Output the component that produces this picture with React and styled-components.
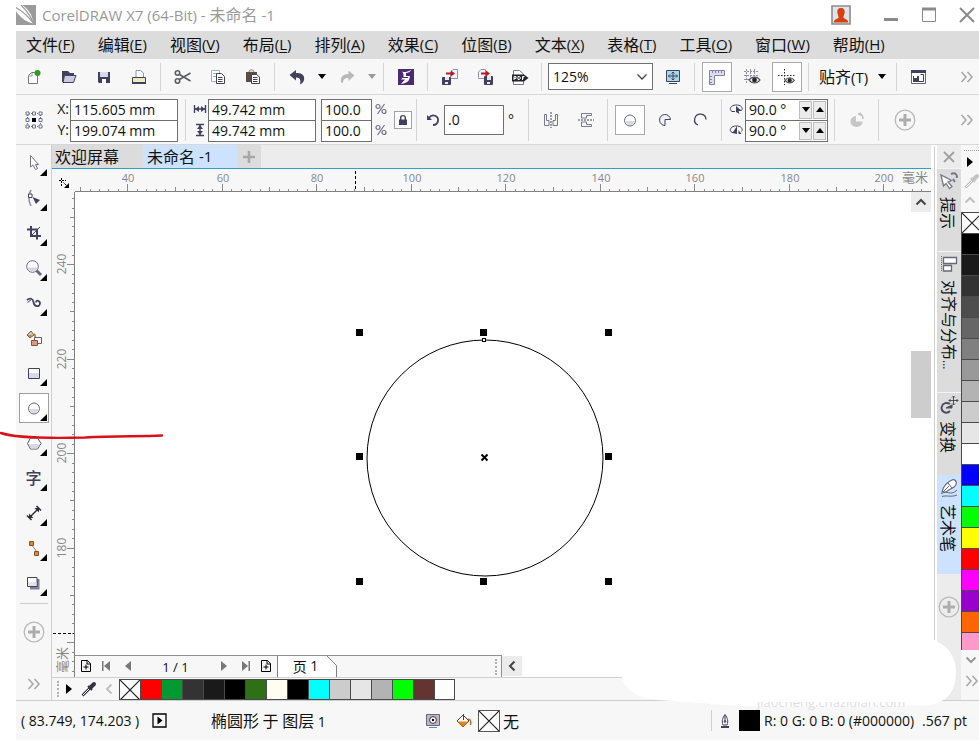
import React from 'react'
import styled, { createGlobalStyle, css } from 'styled-components'


const INK = '#41415f'

const MENUS = [
	['文件', 'F'], ['编辑', 'E'], ['视图', 'V'], ['布局', 'L'], ['排列', 'A'], ['效果', 'C'],
	['位图', 'B'], ['文本', 'X'], ['表格', 'T'], ['工具', 'O'], ['窗口', 'W'], ['帮助', 'H'],
]

const DOC_COLORS = [
	'none', '#ff0000', '#009a33', '#333333', '#1a1a1a', '#000000', '#2d7016', '#fffcf0',
	'#000000', '#00ffff', '#cccccc', '#e6e6e6', '#b3b3b3', '#00ff00', '#663333', '#ffffff',
]

const PALETTE = [
	'none', '#000000', '#1a1a1a', '#333333', '#4d4d4d', '#666666', '#808080', '#999999',
	'#b3b3b3', '#cccccc', '#e6e6e6', '#ffffff', '#0000ff', '#00ffff', '#00ff00', '#ffff00',
	'#ff0000', '#ff00ff', '#9900cc', '#ff6600', '#ff99cc',
]

// ruler scale: pixels per millimetre, and where a known unit falls
const PX_PER_MM = 4.725
const H_ORIGIN = 336.3 - 100 * PX_PER_MM
const V_ORIGIN = 72.7 + 240 * PX_PER_MM


/* ---------- icons ---------- */

const Icon = ({ size = 18, children, ...rest }) => (
	<svg width={size} height={size} viewBox={`0 0 ${size} ${size}`} fill="none" stroke={INK} aria-hidden="true" {...rest}>
		{children}
	</svg>
)

const LogoIcon = () => (
	<Icon size={20} stroke="none">
		<path d="M0 0H20V20H0Z" fill="#9b9b9b" />
		<path d="M0 0H6C12 4 16 9 17.500 18.500C9 17 3 11 0 6Z" fill="#fff" />
		<path d="M0 2.500C6 6 13 12 17.500 18.500M5 0C10 5 15 11 17.500 18.500" stroke="#9b9b9b" strokeWidth="1.200" />
	</Icon>
)

const UserIcon = () => (
	<Icon size={20} stroke="none">
		<path d="M1 1H19V19H1Z" fill="#dfe3ea" stroke="#8d8d8d" strokeWidth="1.600" />
		<path d="M10 3C13 3 14 5 13.600 8C13.300 10 12.400 11 12.400 12.500C13 14 17 14 17.400 17.500H2.600C3 14 7 14 7.600 12.500C7.600 11 6.700 10 6.400 8C6 5 7 3 10 3Z" fill="#d8400f" />
	</Icon>
)

const MinimizeIcon = () => <Icon size={16}><path d="M1 12.500H15" stroke="#8a8a8a" strokeWidth="3" /></Icon>
const MaximizeIcon = () => (
	<Icon size={16} stroke="#8a8a8a"><path d="M1.500 1.500H14.500V14.500H1.500Z" /><path d="M1 2H15" strokeWidth="3" /></Icon>
)
const CloseIcon = () => <Icon size={16} stroke="#8a8a8a" strokeWidth="2"><path d="M1 1L15 15M15 1L1 15" /></Icon>

const NewIcon = () => (
	<Icon>
		<path d="M3.500 7.500L6.500 4.500H12.500V15.500H3.500Z" fill="#fff" stroke="#77777f" />
		<path d="M4 8H7V5" stroke="#9a9aa2" />
		<circle cx="12.500" cy="5" r="3" fill="#2f9a1e" stroke="none" />
	</Icon>
)
const OpenIcon = () => (
	<Icon>
		<path d="M2 3H8L10 5H14V7H5L3 14H2Z" fill={INK} stroke="none" />
		<path d="M4.500 7.500H16L13.500 14.500H3Z" fill="#c7cddd" />
	</Icon>
)
const SaveIcon = () => (
	<Icon>
		<path d="M3 4H15V15H4L3 14Z" fill={INK} stroke="none" />
		<path d="M5 4H13V9H5Z" fill="#d6daea" stroke="none" />
		<path d="M7 11H11V15H7Z" fill="#fff" stroke="none" />
	</Icon>
)
const PrintIcon = () => (
	<Icon>
		<path d="M6 9V2.500H10.500L13.500 5V9" fill="#fff" stroke="#8a9aa5" />
		<path d="M2.500 9.500H15.500V14.500H2.500Z" fill="#efe9c4" />
		<path d="M2 15H16" strokeWidth="2" />
	</Icon>
)
const CutIcon = () => (
	<Icon stroke="#5c5c66" strokeWidth="1.600">
		<circle cx="3.500" cy="5" r="2.200" /><circle cx="3.500" cy="13" r="2.200" />
		<path d="M5.500 6.500L16.500 13M5.500 11.500L16.500 5" />
	</Icon>
)
const CopyIcon = () => (
	<Icon>
		<path d="M2.500 2.500H10.500V13.500H2.500Z" fill="#fff" stroke="#9db5b0" />
		<path d="M4 5.500H9M4 8.500H7" stroke="#9db5b0" />
		<path d="M7.500 5.500H12.500L15.500 8.500V15.500H7.500Z" fill="#fff" />
		<path d="M9 9.500H13.500M9 11.500H13.500M9 13.500H13.500" />
	</Icon>
)
const PasteIcon = () => (
	<Icon>
		<path d="M2 4H13V14H2Z" fill="#5c4d44" stroke="none" />
		<path d="M5 4C5 1 10 1 10 4" fill="#d9dccc" stroke="#8a8a80" />
		<path d="M7.500 6.500H12.500L15.500 9V15.500H7.500Z" fill="#fff" />
		<path d="M9 9.500H13.500M9 11.500H13.500M9 13.500H13.500" />
	</Icon>
)
const UndoIcon = () => (
	<Icon stroke="none"><path d="M1.500 7L8 2V5.200C14 4.500 17 8 16 12C15.500 14 14 15.500 12 16.500C13 13 12.500 9.300 8 9.500V12.500Z" fill={INK} /></Icon>
)
const RedoIcon = () => (
	<Icon stroke="none"><path d="M16.500 7.500L10.500 2.500V6C5 6 2 9 3 14.500L5 15C5 11.500 6.500 10 10.500 10V13Z" fill="#b9b9b9" /></Icon>
)
const LauncherIcon = () => (
	<Icon stroke="none">
		<path d="M1 1H17V17H1Z" fill="#4b2a72" />
		<path d="M5 3C6 5 10 4 14.500 2C13 4 11 5 9 5V8H13L12 12C11 14 8 15.500 4 16C5.500 14 7 13 8 11.500H4L6.500 9V6Z" fill="#fff" />
		<path d="M6 9.500H11" stroke="#4b2a72" />
	</Icon>
)
const ImportIcon = () => (
	<Icon>
		<path d="M9.500 9.500V4L12 1.500H16.500V10.500H10" fill="#f4f4fa" stroke="#8f8fa8" />
		<path d="M1.500 9.500H9.500V16.500H1.500Z" fill={INK} /><path d="M4 9H8V12H4ZM4 14H7V16H4Z" fill="#e4e6f0" stroke="none" />
		<path d="M5 5.500H11" stroke="#c4151c" strokeWidth="2" /><path d="M10 2.500L14 5.500L10 8.500Z" fill="#c4151c" stroke="none" />
	</Icon>
)
const ExportIcon = () => (
	<Icon>
		<path d="M2.500 9.500V4L5 1.500H9.500V10.500H2.500Z" fill="#f4f4fa" stroke="#8f8fa8" />
		<path d="M8.500 8.500H16.500V16.500H8.500Z" fill={INK} /><path d="M11 8H15V12H11ZM11 14H14V16H11Z" fill="#e4e6f0" stroke="none" />
		<path d="M5 5.500H11" stroke="#c4151c" strokeWidth="2" /><path d="M10 2.500L14 5.500L10 8.500Z" fill="#c4151c" stroke="none" />
	</Icon>
)
const PdfIcon = () => (
	<Icon>
		<path d="M2.500 16.500V2.500H8.500L12.500 6V16.500Z" fill="#fff" stroke="#77778c" />
		<path d="M1 6.500H13L17.500 10L13 13.500H1Z" fill="#22222c" stroke="none" />
		<path d="M3 12V8.500H5V10.500H3M7 8.500V11.500H8.500L9.500 10L8.500 8.500ZM11.500 12V8.500H13.500M11.500 10H13" stroke="#fff" />
	</Icon>
)
const FullScreenIcon = () => (
	<Icon>
		<path d="M2.500 2.500H15.500V13.500H2.500Z" fill="#a9d7ea" />
		<path d="M9 4V12M4.500 8H13.500M7.500 5.500L9 4L10.500 5.500M7.500 10.500L9 12L10.500 10.500M6 6.500L4.500 8L6 9.500M12 6.500L13.500 8L12 9.500" />
		<path d="M5 15.500H13" />
	</Icon>
)
const RulersIcon = () => (
	<Icon stroke="#8583ac">
		<path d="M1.500 2.500H16.500V7.500H6.500V16.500H1.500Z" fill="#dcdcf0" />
		<path d="M4.500 2V5M7.500 2V5M10.500 2V5M13.500 2V5M1.500 8.500H4M1.500 11.500H4M1.500 14.500H4" />
	</Icon>
)
const Eye = ({ x, y }) => (
	<g transform={`translate(${x} ${y})`}>
		<path d="M0 4C3 0 8 0 11 4C8 8 3 8 0 4Z" fill="#e9e9ee" stroke="#4d4d55" strokeWidth="1.200" />
		<circle cx="5.500" cy="4" r="2.400" fill="#26262e" stroke="none" />
	</g>
)
const GridIcon = () => (
	<Icon>
		<path d="M1 3.500H15M1 7.500H15M1 11.500H6M3.500 1V15M7.500 1V9M11.500 1V8" stroke="#8e8ea6" strokeDasharray="2 1" />
		<Eye x={6} y={8} />
	</Icon>
)
const GuidesIcon = () => (
	<Icon>
		<path d="M6.500 1V17M0 7.500H17" stroke="#26262e" strokeDasharray="1.500 1.500" />
		<g transform="translate(7 9) scale(.85)"><Eye x={0} y={0} /></g>
	</Icon>
)
const OptionsIcon = () => (
	<Icon>
		<path d="M1.500 2.500H15.500V15.500H1.500Z" fill="#fff" stroke="#66667f" /><path d="M1 3.500H16" strokeWidth="3" />
		<path d="M3 8H9V14H3Z" fill={INK} stroke="none" /><path d="M10.500 6.500H13.500V13.500H9" />
		<path d="M4 8H7V10H4Z" fill="#fff" stroke="none" />
	</Icon>
)
const MoreIcon = () => (
	<Icon size={14} stroke="#a9a9a9" strokeWidth="1.600"><path d="M1.500 2L6 7L1.500 12M7.500 2L12 7L7.500 12" /></Icon>
)

const OriginIcon = () => (
	<Icon stroke="#6d6d92">
		<path d="M4 2.500H14M4 15.500H14M2.500 4V14M15.500 4V14" strokeDasharray="1 1" />
		{[2.5, 9, 15.5].map(x => [2.5, 9, 15.5].map(y => (x === 9 && y === 9
			? <path key="mid" d="M7 7H11V11H7Z" fill="#000" stroke="none" />
			: <path key={`${x}-${y}`} d={`M${x - 1.5} ${y - 1.5}h3v3h-3Z`} fill="#fff" />)))}
	</Icon>
)
const WidthIcon = () => (
	<Icon size={14}><path d="M1.500 3V11M12.500 3V11M2 7H12" strokeWidth="1.400" /><path d="M2 7L6 4V10ZM12 7L8 4V10Z" fill={INK} stroke="none" /></Icon>
)
const HeightIcon = () => (
	<Icon size={14}><path d="M3 1.500H11M3 12.500H11M7 2V12" strokeWidth="1.400" /><path d="M7 2L4 6H10ZM7 12L4 8H10Z" fill={INK} stroke="none" /></Icon>
)
const PercentIcon = () => (
	<Icon size={12} stroke="#6e6e80" strokeWidth="1.200"><circle cx="3" cy="3.500" r="2" /><circle cx="9" cy="8.500" r="2" /><path d="M9.500 1L2.500 11" /></Icon>
)
const LockIcon = () => (
	<Icon size={12}><path d="M2 5.500H10V11H2Z" fill={INK} stroke="none" /><path d="M3.700 6V3.500C3.700 1 8.300 1 8.300 3.500V6" strokeWidth="1.400" /></Icon>
)
const RotateIcon = () => (
	<Icon size={14} strokeWidth="1.800"><path d="M3 5C6 0 13 3 12 8C11.500 10.500 9.500 12 7 12" /><path d="M1 2V7H6Z" fill={INK} stroke="none" /></Icon>
)
const MirrorHIcon = () => (
	<Icon><path d="M2.500 3.500H4.500V9.500H7V14.500H2.500ZM15.500 3.500H13.500V9.500H11V14.500H15.500Z" stroke="#77778f" /><path d="M9 1V17" strokeDasharray="2 1" /></Icon>
)
const MirrorVIcon = () => (
	<Icon><path d="M4.500 2.500H14.500V4.500H9.500V7H4.500ZM4.500 15.500H14.500V13.500H9.500V11H4.500Z" stroke="#77778f" /><path d="M1 9H17" strokeDasharray="2 1" /></Icon>
)
const EllipseIcon = () => (
	<Icon stroke="#66667c"><circle cx="9" cy="9.500" r="5.500" fill="#fff" /><path d="M4 10H14C13 15.500 5 15.500 4 10Z" fill="#d9d9e2" stroke="none" /></Icon>
)
const PieIcon = () => <Icon><path d="M14.500 8.500A5.500 5.500 0 1 0 9 14.500V8.500Z" fill="#f1f1f6" /></Icon>
const ArcIcon = () => <Icon strokeWidth="1.300"><path d="M15 8.500A5.700 5.700 0 1 0 7 14" /></Icon>
const AngleIcon = ({ flip }) => (
	<Icon size={14}>
		<path d="M3 9.500C0 8 1 3.500 6.500 3C12 2.500 14.500 6 12.500 8.500" />
		<path d="M3 9.500H6" />
		<path d={flip ? 'M8 3V11L3.500 10ZM9.500 7L12.500 11H9.500Z' : 'M7 4L13 9L9.500 9L10.500 12L7 10Z'} fill={INK} stroke="none" />
	</Icon>
)
const SwapPieIcon = () => (
	<Icon stroke="none"><path d="M8 5V10.500H14.500A6 5.500 0 1 1 8 5Z" fill="#c6c6c6" /><path d="M11 3C14 3 15 5 15 8" stroke="#bebebe" strokeWidth="1.400" /><path d="M9.500 3L12.500 1V5Z" fill="#bebebe" /></Icon>
)
const AddIcon = () => (
	<Icon size={22} stroke="#b9b9b9"><circle cx="11" cy="11" r="9.800" strokeWidth="1.300" /><path d="M11 5V17M5 11H17" strokeWidth="3" stroke="#adadad" /></Icon>
)

const PickIcon = () => <Icon stroke="#72728a"><path d="M5.500 1.500V13L8 11L10.500 15.500L12.500 14.500L10.500 10.500H13.500Z" fill="#fff" /></Icon>
const ShapeIcon = () => (
	<Icon><path d="M6 1C3 6 3 11 6 17" stroke="#8b8ba0" strokeWidth="1.500" /><path d="M3.500 5H7V8.500H3.500Z" fill="#fff" /><path d="M7.500 8L15 11L11 15Z" fill={INK} stroke="none" /></Icon>
)
const CropIcon = () => <Icon strokeWidth="2"><path d="M6 2V12H16M2 5.500H12V15.500" /><path d="M6 12L15 3" strokeWidth="1" /></Icon>
const ZoomIcon = () => (
	<Icon stroke="#66667c"><path d="M11.500 11.500L16 16" strokeWidth="2.800" /><circle cx="7.500" cy="7.500" r="5.800" fill="#fff" /><path d="M2.500 8.500H12.500C11 13.500 4 13.500 2.500 8.500Z" fill="#d5d5df" stroke="none" /></Icon>
)
const FreehandIcon = () => (
	<Icon strokeWidth="1.800"><path d="M2 6C5 3.500 8 4.500 8.500 8C9 13 14.500 13.500 15 9.500C15 6.500 11 5.500 11 8.500" /><path d="M2.500 8.500L6.500 5.500" strokeWidth="1" /></Icon>
)
const SmartFillIcon = () => (
	<Icon>
		<path d="M2 6L6 2L9 6L5 9Z" fill="#c9c9c2" stroke="#666" /><path d="M9 5C11 6 10 8 10 9" stroke="#c46c20" strokeWidth="1.500" />
		<path d="M2.500 6L5 9L8 6.500Z" fill="#c87a2c" stroke="none" />
		<path d="M9.500 8.500H16.500V14.500H9.500Z" fill="#fff" stroke="#6a5870" /><path d="M6.500 11.500H12.500V16.500H6.500Z" fill="#e69a6a" stroke="#6a5870" />
	</Icon>
)
const RectIcon = () => <Icon><path d="M3.500 4.500H14.500V14.500H3.500Z" fill="#fff" /><path d="M4 9H14V14H4Z" fill="#d9d9e4" stroke="none" /></Icon>
const PolygonIcon = () => (
	<Icon stroke="#56566c"><path d="M5.500 4H12.500L16 9.500L12.500 15H5.500L2.500 9.500Z" fill="#fff" /><path d="M3.500 10H15L12.200 14.500H5.800Z" fill="#d9d9e4" stroke="none" /></Icon>
)
const DimensionIcon = () => (
	<Icon stroke="#2c2c38">
		<path d="M4 14L14 4" strokeWidth="1.400" />
		<path d="M2 11.500L6.500 16M11.500 2L16 6.500" strokeWidth="1.600" />
		<path d="M4 14V9.500L8.500 14ZM14 4V8.500L9.500 4Z" fill="#2c2c38" stroke="none" />
	</Icon>
)
const ConnectorIcon = () => (
	<Icon><path d="M6 5L12 13" stroke="#888" /><path d="M4.500 2.500H8.500V6.500H4.500ZM9.500 12.500H13.500V16.500H9.500Z" fill="#df8a2c" stroke="#84532a" /></Icon>
)
const ShadowIcon = () => (
	<Icon><path d="M5 5H14.500V15.500H5Z" fill="#7f7f9a" stroke="none" /><path d="M2.500 3.500H12V12.500H2.500Z" fill="#fff" /><path d="M3 8H11.500V12H3Z" fill="#e3e3ec" stroke="none" /></Icon>
)

const CornerIcon = () => (
	<Icon size={12} stroke="#000"><path d="M1 3.500H8M3.500 1V9" strokeDasharray="2 1" /><path d="M5.500 5.500L9 9" strokeDasharray="1.500 .7" /><path d="M11 6V11H6Z" fill="#000" stroke="none" /></Icon>
)
const DropperIcon = ({ color = '#33333f' }) => (
	<Icon size={16} stroke={color}><path d="M1.500 14.500L9 7" strokeWidth="2.600" /><path d="M2 14L8 8" stroke="#fff" /><path d="M7 5L11 9" strokeWidth="2" /><path d="M10 6L13 3" strokeWidth="4" strokeLinecap="round" /></Icon>
)
const Triangle = ({ dir = 'right', color = '#000', bar }) => (
	<Icon size={12} stroke="none" fill={color}>
		<path d={dir === 'right' ? 'M3 1V11L9 6Z' : 'M9 1V11L3 6Z'} />
		{bar && <path d={dir === 'right' ? 'M9.500 1H11V11H9.500Z' : 'M1 1H2.500V11H1Z'} />}
	</Icon>
)
const Caret = ({ up, color = '#000' }) => (
	<svg width="8" height="5" viewBox="0 0 8 5" fill={color} aria-hidden="true"><path d={up ? 'M0 5L4 0L8 5Z' : 'M0 0H8L4 5Z'} /></svg>
)
const Chevron = ({ dir, color = '#444', width = 2 }) => (
	<Icon size={12} stroke={color} strokeWidth={width}>
		<path d={{ up: 'M1.500 8.500L6 4L10.500 8.500', down: 'M1.500 3.500L6 8L10.500 3.500', left: 'M8.500 1.500L4 6L8.500 10.500' }[dir]} />
	</Icon>
)
const AddPageIcon = () => <Icon size={14} stroke="#000"><path d="M2.500 1.500H8.500L11.500 4.500V12.500H2.500Z" /><path d="M8 1.500V5H11.500M7 5.500V10.500M4.500 8H9.500" /></Icon>
const PlayBoxIcon = () => <Icon size={15} stroke="#000"><path d="M1 1H14V14H1Z" strokeWidth="1.300" /><path d="M5.500 3.500V11.500L10.500 7.500Z" fill="#000" stroke="none" /></Icon>
const ProofIcon = () => (
	<Icon size={16}><path d="M1.500 1.500H14.500V12.500H1.500Z" fill="#c2b2c4" stroke="#5a6b8c" /><circle cx="8" cy="7" r="3.400" fill="#fff" stroke="#33333f" /><circle cx="8" cy="7" r="1.200" fill="#000" stroke="none" /><path d="M4 14.500H12" stroke="#6f86b0" /></Icon>
)
const BucketIcon = () => (
	<Icon size={16}><path d="M1 8L7 2L13 8L7 14Z" fill="#fff" /><path d="M1.500 8.500H12.500L7 14Z" fill="#e58314" stroke="none" /><path d="M7.500 7V1" /><path d="M12 6C15 6.500 15 9 14.500 12" stroke="#c46c20" strokeWidth="1.500" /></Icon>
)
const PenIcon = () => (
	<Icon size={16}><path d="M8 1.500C5.500 5 4.500 8 6 12H10C11.500 8 10.500 5 8 1.500Z" fill="#f1f1f8" /><path d="M8 2V8" /><circle cx="8" cy="8.500" r=".8" fill={INK} /><path d="M4 14H12" strokeWidth="2" /></Icon>
)

const HintsIcon = () => (
	<Icon size={20} stroke="#77778c">
		<path d="M2 4L4.500 15L7 12.500L10.500 17.500L13 15.500L9 11L12.500 9.500Z" fill="#fff" strokeWidth="1.300" />
		<path d="M12 3C17 1 18 4 18 7" strokeWidth="2" /><path d="M14 8L16 11" strokeWidth="2" />
	</Icon>
)
const AlignIcon = () => (
	<Icon size={20} stroke="#66667c"><path d="M2.500 2V18" strokeDasharray="1 1" /><path d="M4.500 3.500H17.500V9.500H4.500ZM4.500 11.500H12.500V17H4.500Z" fill="#fff" strokeWidth="1.300" /></Icon>
)
const TransformIcon = () => (
	<Icon size={20} stroke="#4c4c5c"><path d="M11 16C7 20 1 16 3 11C4 8 8 7 11 9" strokeWidth="2" /><path d="M7 13H13V10Z" fill="#4c4c5c" /><path d="M14.500 1V10M10 5.500H19M13 2.500L14.500 1L16 2.500M13 8.500L14.500 10L16 8.500M11.500 4L10 5.500L11.500 7M17.500 4L19 5.500L17.500 7" /></Icon>
)
const ArtPenIcon = () => (
	<Icon size={20} stroke="#66667c">
		<path d="M3 14C4 9 8 4 14 1.500C18 2 18.500 6 15 9C12 11 9 12 7 14Z" fill="#fff" strokeWidth="1.200" /><path d="M4 14L10 8M9 5L13 10" /><path d="M2 16C8 11 11 19 18 12M3 18.500C8 17 12 19.500 18 17" />
	</Icon>
)

const TOOLS = [
	{ name: '选择工具', icon: PickIcon }, { name: '形状工具', icon: ShapeIcon }, { name: '裁剪工具', icon: CropIcon },
	{ name: '缩放工具', icon: ZoomIcon }, { name: '手绘工具', icon: FreehandIcon },
	{ name: '智能填充工具', icon: SmartFillIcon, single: true }, { name: '矩形工具', icon: RectIcon },
	{ name: '椭圆形工具', icon: EllipseIcon, active: true }, { name: '多边形工具', icon: PolygonIcon },
	{ name: '文本工具', glyph: '字' }, { name: '平行度量工具', icon: DimensionIcon },
	{ name: '直线连接器工具', icon: ConnectorIcon }, { name: '阴影工具', icon: ShadowIcon },
]

const DOCKERS = [
	{ name: '提示', icon: HintsIcon }, { name: '对齐与分布', icon: AlignIcon, cut: true },
	{ name: '变换', icon: TransformIcon }, { name: '艺术笔', icon: ArtPenIcon, active: true },
]


/* ---------- pieces ---------- */

const range = (from, to, step) => {
	const out = []
	for (let u = from; u <= to; u += step) out.push(u)
	return out
}

const tickSize = u => (u % 20 === 0 ? 7 : u % 10 === 0 ? 4 : 2)

const HorizontalRuler = () => (
	<RulerSvg>
		{range(28, 600, 2).map(u => {
			const x = Math.floor(H_ORIGIN + u * PX_PER_MM) + 0.5
			return <path key={u} d={`M${x} 22V${22 - tickSize(u)}`} />
		})}
		{range(40, 200, 20).map(u => (
			<text key={u} x={Math.floor(H_ORIGIN + u * PX_PER_MM) + 1} y="13" textAnchor="middle">{u}</text>
		))}
		<path d="M280.500 2V22" stroke="#000" strokeDasharray="3 2" />
	</RulerSvg>
)

const VerticalRuler = () => (
	<RulerSvg>
		{range(-100, 254, 2).map(u => {
			const y = Math.floor(V_ORIGIN - u * PX_PER_MM) + 0.5
			return <path key={u} d={`M22 ${y}H${22 - tickSize(u)}`} />
		})}
		{[240, 220, 200, 180].map(u => {
			const y = Math.floor(V_ORIGIN - u * PX_PER_MM)
			return <text key={u} textAnchor="middle" transform={`translate(14 ${y}) rotate(-90)`}>{u}</text>
		})}
		<path d="M1 441.500H22" stroke="#000" strokeDasharray="3 2" />
	</RulerSvg>
)

const Drawing = () => (
	<DrawingSvg>
		<circle cx="410" cy="266" r="118" fill="none" stroke="#000" />
		{[284, 408, 533].map(x => [140, 264, 389].map(y => (
			(x !== 408 || y !== 264) && <rect key={`${x}-${y}`} x={x - 3} y={y - 3} width="7" height="7" />
		)))}
		<path d="M406.500 262.500L412.500 268.500M412.500 262.500L406.500 268.500" stroke="#000" strokeWidth="2" />
		<rect x="407.500" y="146.500" width="3" height="3" fill="#fff" stroke="#000" />
	</DrawingSvg>
)

const Swatches = ({ colors, vertical }) => colors.map((c, i) => (
	<Swatch key={i} type="button" aria-label={c} $color={c} $vertical={vertical}>
		{c === 'none' && <CrossBox />}
	</Swatch>
))

const CrossBox = () => (
	<svg width="100%" height="100%" viewBox="0 0 20 20" preserveAspectRatio="xMinYMin slice" stroke="#222" strokeWidth="1.200" aria-hidden="true">
		<path d="M0 0L20 20M20 0L0 20" />
	</svg>
)

const Tool = ({ name, active, disabled, children }) => (
	<ToolButton type="button" aria-label={name} disabled={disabled}>
		<ToolFace $active={active}>{children}</ToolFace>
	</ToolButton>
)


const App = () => {
	return (
		<Window>
			<GlobalStyle />
			<TitleBar>
				<LogoIcon />
				<Title>CorelDRAW X7 (64-Bit) - <Han>未命名</Han> -1</Title>
				<UserButton type="button" aria-label="用户"><UserIcon /></UserButton>
				<WindowButton type="button" aria-label="最小化"><MinimizeIcon /></WindowButton>
				<WindowButton type="button" aria-label="最大化"><MaximizeIcon /></WindowButton>
				<WindowButton type="button" aria-label="关闭"><CloseIcon /></WindowButton>
			</TitleBar>

			<MenuBar>
				{MENUS.map(([label, key]) => (
					<MenuButton key={key} type="button"><Han>{label}</Han>(<u>{key}</u>)</MenuButton>
				))}
			</MenuBar>

			<StandardBar>
				<Tool name="新建"><NewIcon /></Tool>
				<Tool name="打开"><OpenIcon /></Tool>
				<Tool name="保存"><SaveIcon /></Tool>
				<Tool name="打印"><PrintIcon /></Tool>
				<Divider />
				<Tool name="剪切"><CutIcon /></Tool>
				<Tool name="复制"><CopyIcon /></Tool>
				<Tool name="粘贴"><PasteIcon /></Tool>
				<Divider />
				<Tool name="撤消"><UndoIcon /></Tool>
				<CaretButton type="button" aria-label="撤消列表"><Caret /></CaretButton>
				<Tool name="重做" disabled><RedoIcon /></Tool>
				<CaretButton type="button" aria-label="重做列表"><Caret color="#999" /></CaretButton>
				<Divider />
				<Tool name="搜索内容"><LauncherIcon /></Tool>
				<Divider />
				<Tool name="导入"><ImportIcon /></Tool>
				<Tool name="导出"><ExportIcon /></Tool>
				<Tool name="发布为 PDF"><PdfIcon /></Tool>
				<Divider />
				<SelectWrap>
					<ZoomSelect aria-label="缩放级别" defaultValue="125%">
						<option>100%</option>
						<option>125%</option>
						<option>200%</option>
					</ZoomSelect>
					<Chevron dir="down" width={1.3} />
				</SelectWrap>
				<Tool name="全屏预览"><FullScreenIcon /></Tool>
				<Divider />
				<Tool name="显示标尺" active><RulersIcon /></Tool>
				<Tool name="显示网格"><GridIcon /></Tool>
				<Tool name="显示辅助线" active><GuidesIcon /></Tool>
				<Divider />
				<SnapButton type="button"><span><Han>贴齐</Han>(T)</span><Caret /></SnapButton>
				<Divider />
				<Tool name="选项"><OptionsIcon /></Tool>
				<MoreButton type="button" aria-label="更多"><MoreIcon /></MoreButton>
			</StandardBar>

			<PropertyBar>
				<Tool name="对象原点"><OriginIcon /></Tool>
				<FieldPair $labelWidth={19}>
					<label htmlFor="pos-x">X:</label><Field id="pos-x" defaultValue="115.605 mm" />
					<label htmlFor="pos-y">Y:</label><Field id="pos-y" defaultValue="199.074 mm" />
				</FieldPair>
				<Divider $wide />
				<FieldPair $labelWidth={15}>
					<label htmlFor="obj-w" aria-label="宽度"><WidthIcon /></label><Field id="obj-w" defaultValue="49.742 mm" />
					<label htmlFor="obj-h" aria-label="高度"><HeightIcon /></label><Field id="obj-h" defaultValue="49.742 mm" />
				</FieldPair>
				<ScalePair>
					<Field id="scale-x" defaultValue="100.0" /><label htmlFor="scale-x" aria-label="水平缩放"><PercentIcon /></label>
					<Field id="scale-y" defaultValue="100.0" /><label htmlFor="scale-y" aria-label="垂直缩放"><PercentIcon /></label>
				</ScalePair>
				<LockButton type="button" aria-label="锁定比率"><LockIcon /></LockButton>
				<Divider />
				<AngleField>
					<label htmlFor="angle" aria-label="旋转角度"><RotateIcon /></label>
					<Field id="angle" defaultValue=".0" />
					<span>°</span>
				</AngleField>
				<Divider />
				<Tool name="水平镜像"><MirrorHIcon /></Tool>
				<Tool name="垂直镜像"><MirrorVIcon /></Tool>
				<Divider />
				<Tool name="椭圆形" active><EllipseIcon /></Tool>
				<Tool name="饼图"><PieIcon /></Tool>
				<Tool name="弧"><ArcIcon /></Tool>
				<Divider />
				<SpinPair>
					{['start', 'end'].map(id => (
						<React.Fragment key={id}>
							<label htmlFor={id} aria-label={id}><AngleIcon flip={id === 'end'} /></label>
							<SpinBox>
								<SpinInput id={id} defaultValue="90.0 °" />
								<SpinButton type="button" aria-label="减"><Caret /></SpinButton>
								<SpinButton type="button" aria-label="加"><Caret up /></SpinButton>
							</SpinBox>
						</React.Fragment>
					))}
				</SpinPair>
				<Divider />
				<Tool name="更改方向" disabled><SwapPieIcon /></Tool>
				<Divider />
				<AddButton type="button" aria-label="快速自定义"><AddIcon /></AddButton>
				<MoreButton type="button" aria-label="更多"><MoreIcon /></MoreButton>
			</PropertyBar>

			<Body>
				<Toolbox>
					{TOOLS.map(({ name, icon: Glyph, glyph, active, single }) => (
						<ToolboxButton key={name} type="button" aria-label={name} $active={active} $flyout={!single}>
							{glyph ? <TextGlyph>{glyph}</TextGlyph> : <Glyph />}
						</ToolboxButton>
					))}
					<ToolboxRule />
					<RoundButton type="button" aria-label="快速自定义"><AddIcon /></RoundButton>
					<ToolboxMore type="button" aria-label="更多工具"><MoreIcon /></ToolboxMore>
				</Toolbox>

				<Workspace>
					<DocTabs>
						<DocTab type="button" $width={91}><Han>欢迎屏幕</Han></DocTab>
						<DocTab type="button" $width={94} $active><Han>未命名</Han> -1</DocTab>
						<NewTab type="button" aria-label="新建文档">
							<Icon size={12} stroke="#a8a8a8" strokeWidth="2.600"><path d="M6 0V12M0 6H12" /></Icon>
						</NewTab>
					</DocTabs>
					<Sheet>
						<Corner><CornerIcon /></Corner>
						<TopRuler><HorizontalRuler /><UnitLabel>毫米</UnitLabel></TopRuler>
						<SideRuler><VerticalRuler /><SideUnitLabel>毫米</SideUnitLabel></SideRuler>
						<Page>
							<Stage>
								<Canvas><Drawing /></Canvas>
								<ScrollBar>
									<ScrollButton type="button" aria-label="向上"><Chevron dir="up" /></ScrollButton>
									<Track><Gap $grow={139} /><Thumb /><Gap $grow={238} /></Track>
								</ScrollBar>
							</Stage>
							<PageRow>
								<PageNav>
									<NavButton type="button" aria-label="前面添加页"><AddPageIcon /></NavButton>
									<NavButton type="button" aria-label="首页"><Triangle dir="left" color="#777" bar /></NavButton>
									<NavButton type="button" aria-label="上一页"><Triangle dir="left" color="#777" /></NavButton>
									<PageCount>1 / 1</PageCount>
									<NavButton type="button" aria-label="下一页"><Triangle color="#777" /></NavButton>
									<NavButton type="button" aria-label="末页"><Triangle color="#777" bar /></NavButton>
									<NavButton type="button" aria-label="后面添加页"><AddPageIcon /></NavButton>
									<PageTab type="button"><Han>页</Han> 1</PageTab>
									<svg width="10" height="21" viewBox="0 0 10 21" fill="#fff" aria-hidden="true">
										<path d="M0 0L9.500 9.500V21H0Z" />
										<path d="M0 0L9.500 9.500V21" fill="none" stroke="#808080" />
									</svg>
									<Grip />
								</PageNav>
								<ScrollButton type="button" aria-label="向左"><Chevron dir="left" /></ScrollButton>
							</PageRow>
						</Page>
					</Sheet>
					<DocPalette>
						<Grip />
						<PaletteButton type="button" aria-label="文档调色板"><Triangle /></PaletteButton>
						<PaletteButton type="button" aria-label="滴管"><DropperIcon /></PaletteButton>
						<PaletteButton type="button" aria-label="向左滚动"><Chevron dir="left" color="#c0c0c0" /></PaletteButton>
						<Swatches colors={DOC_COLORS} />
					</DocPalette>
				</Workspace>

				<Splitter />

				<Dockers>
					<DockClose type="button" aria-label="关闭泊坞窗">
						<Icon size={12} stroke="#a0a0a0" strokeWidth="1.800"><path d="M1 1L11 11M11 1L1 11" /></Icon>
					</DockClose>
					{DOCKERS.map(({ name, icon: Glyph, cut, active }) => (
						<DockTab key={name} type="button" $active={active}>
							<Glyph />
							<DockLabel>{name}{cut && <small>...</small>}</DockLabel>
						</DockTab>
					))}
					<DockAdd type="button" aria-label="添加泊坞窗"><AddIcon /></DockAdd>
				</Dockers>

				<ColorPalette>
					<PaletteHead>
						<Dots />
						<Triangle />
						<DropperIcon color="#c4c4c4" />
						<Chevron dir="up" color="#c0c0c0" />
					</PaletteHead>
					<PaletteList><Swatches colors={PALETTE} vertical /></PaletteList>
					<PaletteFoot>
						<Chevron dir="down" color="#999" />
						<MoreIcon />
					</PaletteFoot>
				</ColorPalette>
			</Body>

			<StatusBar>
				<StatusCell $gap={13}>
					<span>( 83.749, 174.203 )</span>
					<button type="button" aria-label="光标位置"><PlayBoxIcon /></button>
				</StatusCell>
				<StatusCell><span><Han>椭圆形 于 图层</Han> 1</span></StatusCell>
				<StatusCell $gap={15}>
					<ProofIcon />
					<BucketIcon />
					<FillInfo><NoFill><CrossBox /></NoFill><Han>无</Han></FillInfo>
				</StatusCell>
				<OutlineCell>
					<PenIcon />
					<OutlineColor />
					<span>R: 0 G: 0 B: 0 (#000000)</span>
					<span>.567 pt</span>
				</OutlineCell>
			</StatusBar>

			<Overlay viewBox="0 0 979 741" preserveAspectRatio="xMinYMin meet" aria-hidden="true">
				<path d="M621 640H905C935 632 956 648 956 672C956 690 948 702 930 705C860 708 740 708 700 703C670 700 642 702 630 690C624 684 621 680 621 670Z" fill="#fff" />
				<text x="757" y="707">jiaocheng.chazidian.com</text>
				<path d="M750 640H935V702H750Z" fill="#fff" />
				<path d="M1 433C15 438 45 438.500 85 437.500C115 436 140 436.500 162 435.500" fill="none" stroke="#d9121a" strokeWidth="2.400" strokeLinecap="round" />
			</Overlay>
		</Window>
	)
}


/* ---------- styles ---------- */

const GlobalStyle = createGlobalStyle`
	* {
		box-sizing: border-box;
	}

	body {
		margin: 0;
		background: #fff;
	}

	button, input, select {
		font: inherit;
		color: inherit;
	}

	button {
		display: flex;
		align-items: center;
		justify-content: center;
		padding: 0;
		border: 0;
		background: none;
		white-space: nowrap;
	}

	svg {
		flex: none;
		display: block;
	}
`;

const Window = styled.div`
	position: relative;
	display: flex;
	flex-direction: column;
	height: 100vh;
	min-height: 640px;
	padding-left: 16px;
	overflow: hidden;
	font-family: "Open Sans", "Noto Sans CJK SC", sans-serif;
	font-size: 14px;
	line-height: 20px;
	color: #111;
	white-space: nowrap;
`;

const Han = styled.span`
	font-family: "Noto Sans CJK SC", sans-serif;
	font-size: 16px;
`;

const TitleBar = styled.header`
	display: flex;
	align-items: center;
	gap: 14px;
	height: 31px;
	flex: none;
	padding-bottom: 2px;
`;

const Title = styled.div`
	flex: 1;
	margin-left: -8px;
	font-size: 15px;
	color: #999;
`;

const WindowButton = styled.button`
	width: 24px;
	height: 24px;
`;

const UserButton = styled(WindowButton)`
	margin-right: 12px;
`;

const MenuBar = styled.nav`
	display: flex;
	align-items: center;
	gap: 23px;
	height: 28px;
	flex: none;
	padding: 0 0 2px 10px;
	background: #dcdcdc;
`;

const MenuButton = styled.button`
	font-size: 15px;

	u {
		text-underline-offset: 2px;
	}
`;

const Bar = styled.div`
	display: flex;
	align-items: center;
	flex: none;
	background: #f7f7f7;
	border-bottom: 1px solid #d8d8d8;
`;

const StandardBar = styled(Bar)`
	height: 36px;
`;

const PropertyBar = styled(Bar)`
	height: 50px;
`;

const Divider = styled.div`
	width: 1px;
	height: 28px;
	flex: none;
	margin: 0 ${p => (p.$wide ? 7 : 4)}px;
	background: #d4d4d4;

	${PropertyBar} & {
		height: 42px;
	}
`;

const ToolButton = styled.button`
	width: 35px;
	height: 32px;
	flex: none;
`;

const ToolFace = styled.span`
	display: flex;
	align-items: center;
	justify-content: center;
	width: 30px;
	height: 30px;

	${p => p.$active && css`
		background: #fff;
		border: 1px solid #a8a8a8;
	`}
`;

const CaretButton = styled.button`
	width: 15px;
	height: 30px;
	flex: none;
`;

const SelectWrap = styled.div`
	position: relative;
	width: 105px;
	height: 27px;
	margin: 0 2px;

	svg {
		position: absolute;
		right: 5px;
		top: 8px;
		pointer-events: none;
	}
`;

const ZoomSelect = styled.select`
	appearance: none;
	width: 100%;
	height: 100%;
	padding: 0 4px;
	border: 1px solid #707070;
	border-radius: 0;
	background: #fff;
`;

const SnapButton = styled.button`
	gap: 10px;
	padding: 0 6px;
	font-size: 15px;
`;

const MoreButton = styled.button`
	margin-left: auto;
	margin-right: 5px;
`;

const FieldPair = styled.div`
	display: grid;
	grid-template-columns: ${p => p.$labelWidth}px 108px;
	grid-auto-rows: 21px;
	align-items: center;

	label {
		display: flex;
		justify-content: flex-end;
		padding-right: 1px;
	}
`;

const Field = styled.input`
	width: 100%;
	min-width: 0;
	height: 22px;
	padding: 0 3px;
	border: 1px solid #707070;
	border-radius: 0;
	background: #fff;
	align-self: start;
`;

const ScalePair = styled(FieldPair)`
	grid-template-columns: 51px 12px;
	column-gap: 4px;
	margin-left: 5px;
`;

const LockButton = styled.button`
	width: 18px;
	height: 18px;
	margin-left: 6px;
	background: #fff;
	border: 1px solid #a0a0b0;
`;

const AngleField = styled.div`
	display: flex;
	align-items: center;
	gap: 4px;
	margin: 0 10px 0 5px;

	${Field} {
		width: 60px;
		height: 30px;
	}
`;

const SpinPair = styled(FieldPair)`
	grid-template-columns: 19px 83px;
	margin-right: 2px;

	label {
		padding-right: 2px;
	}
`;

const SpinBox = styled.div`
	display: flex;
	align-self: start;
	height: 22px;
	padding: 1px;
	gap: 1px;
	background: #fff;
	border: 1px solid #707070;
`;

const SpinInput = styled.input`
	flex: 1;
	min-width: 0;
	padding: 0 2px;
	border: 0;
	background: none;
`;

const SpinButton = styled.button`
	width: 13px;
	background: #ececec;
	border: 1px solid #bdbdbd;
`;

const AddButton = styled.button`
	width: 35px;
	margin-left: 4px;
`;

const Body = styled.main`
	display: flex;
	flex: 1;
	min-height: 0;
	background: #fff;
`;

const Toolbox = styled.div`
	display: flex;
	flex-direction: column;
	align-items: center;
	gap: 5px;
	width: 36px;
	flex: none;
	padding-top: 3px;
	background: #f7f7f7;
	border-right: 1px solid #cfcfcf;
`;

const ToolboxButton = styled.button`
	position: relative;
	width: 30px;
	height: 30px;
	flex: none;
	border: 1px solid ${p => (p.$active ? '#a0a0a0' : 'transparent')};
	background: ${p => (p.$active ? '#fff' : 'none')};

	${p => p.$flyout && css`
		&::after {
			content: '';
			position: absolute;
			right: 1px;
			bottom: 1px;
			border-style: solid;
			border-width: 0 0 7px 7px;
			border-color: transparent transparent #000;
		}
	`}
`;

const TextGlyph = styled.span`
	font-size: 16px;
	font-weight: 500;
	color: ${INK};
`;

const ToolboxRule = styled.div`
	width: 28px;
	height: 1px;
	flex: none;
	background: #cfcfcf;
`;

const RoundButton = styled.button`
	margin-top: 12px;
`;

const ToolboxMore = styled.button`
	margin-top: auto;
	margin-bottom: 9px;
`;

const Workspace = styled.div`
	display: flex;
	flex-direction: column;
	flex: 1;
	min-width: 0;
`;

const DocTabs = styled.div`
	display: flex;
	height: 24px;
	flex: none;
	background: #ececec;
	border-bottom: 1px solid #2f9fc4;
`;

const DocTab = styled.button`
	justify-content: flex-start;
	width: ${p => p.$width}px;
	padding: 0 0 2px ${p => (p.$active ? 4 : 3)}px;
	font-size: 15px;
	white-space: pre;
	background: ${p => (p.$active ? '#cce2ff' : '#dcdcdc')};
`;

const NewTab = styled.button`
	width: 24px;
	background: #dcdcdc;
`;

const Sheet = styled.div`
	display: grid;
	grid-template-columns: 23px 1fr;
	grid-template-rows: 23px 1fr;
	flex: 1;
	min-height: 0;
`;

const Corner = styled.div`
	display: flex;
	align-items: center;
	justify-content: center;
	padding-top: 4px;
	background: #f7f7f7;
`;

const RulerSvg = styled.svg`
	width: 100%;
	height: 100%;
	stroke: #8a8a8a;

	text {
		font-size: 11px;
		fill: #888;
		stroke: none;
	}
`;

const TopRuler = styled.div`
	position: relative;
	min-width: 0;
	overflow: hidden;
	background: #f7f7f7;
	border-bottom: 1px solid #808080;
`;

const SideRuler = styled.div`
	position: relative;
	min-height: 0;
	overflow: hidden;
	background: #f7f7f7;
	border-right: 1px solid #808080;

	text {
		font-size: 12px;
	}
`;

const UnitLabel = styled.span`
	position: absolute;
	right: 3px;
	top: -2px;
	font-size: 13px;
	color: #888;
`;

const SideUnitLabel = styled.span`
	position: absolute;
	left: 0;
	bottom: 4px;
	font-size: 13px;
	color: #888;
	writing-mode: sideways-lr;
`;

const Page = styled.div`
	display: flex;
	flex-direction: column;
	min-width: 0;
	min-height: 0;
`;

const Stage = styled.div`
	display: flex;
	flex: 1;
	min-height: 0;
`;

const Canvas = styled.div`
	flex: 1;
	min-width: 0;
	background: #fff;
`;

const DrawingSvg = styled.svg`
	width: 100%;
	height: 100%;
`;

const ScrollBar = styled.div`
	display: flex;
	flex-direction: column;
	width: 20px;
	flex: none;
`;

const ScrollButton = styled.button`
	width: 20px;
	height: 20px;
	flex: none;
	background: #ececec;
`;

const Track = styled.div`
	display: flex;
	flex-direction: column;
	flex: 1;
`;

const Gap = styled.div`
	flex: ${p => p.$grow};
`;

const Thumb = styled.div`
	flex: 67;
	background: #cdcdcd;
`;

const PageRow = styled.div`
	display: flex;
	align-items: center;
	height: 22px;
	flex: none;
`;

const PageNav = styled.div`
	display: flex;
	align-items: center;
	width: 427px;
	height: 22px;
	background: #f7f7f7;
	border-top: 1px solid #909090;
	border-right: 1px solid #909090;
`;

const NavButton = styled.button`
	width: 21px;
	height: 21px;
	flex: none;
	padding-bottom: 2px;
`;

const PageCount = styled.span`
	width: 75px;
	text-align: center;
	font-size: 13px;
`;

const PageTab = styled.button`
	width: 50px;
	height: 21px;
	margin-left: 1px;
	padding: 0 0 2px 6px;
	white-space: pre;
	background: #fff;
	border-left: 1px solid #808080;

	${Han} {
		font-size: 14px;
	}
`;

const Grip = styled.div`
	width: 1px;
	height: 16px;
	border-left: 2px dotted #b0b0b0;

	${PageNav} & {
		margin-left: auto;
		margin-right: 4px;
	}
`;

const DocPalette = styled.div`
	display: flex;
	align-items: center;
	height: 23px;
	flex: none;
	padding-left: 5px;
	background: #f7f7f7;
	border-top: 1px solid #cfcfcf;
`;

const PaletteButton = styled.button`
	width: 20px;
	flex: none;
`;

const Swatch = styled.button`
	display: block;
	width: 21px;
	height: 21px;
	flex: none;
	background: ${p => (p.$color === 'none' ? '#fff' : p.$color)};
	border: 1px solid #4a4a4a;
	border-width: ${p => (p.$vertical ? '1px 0 0 1px' : '1px 0 1px 1px')};

	&:last-child {
		border-right-width: ${p => (p.$vertical ? 0 : 1)}px;
	}
`;

const Splitter = styled.div`
	width: 4px;
	flex: none;
	margin: 2px 2px 0 0;
	border-right: 1px solid #cfcfcf;
`;

const Dockers = styled.aside`
	display: flex;
	flex-direction: column;
	align-items: center;
	width: 24px;
	flex: none;
	background: #ececec;
`;

const DockClose = styled.button`
	width: 24px;
	height: 23px;
`;

const DockTab = styled.button`
	flex-direction: column;
	gap: 6px;
	width: 24px;
	padding: 2px 0 22px;
	background: ${p => (p.$active ? '#cce2ff' : '#dcdcdc')};
	border-top: 1px solid ${p => (p.$active ? '#cce2ff' : '#f4f4f4')};
`;

const DockLabel = styled.span`
	padding-right: 3px;
	font-size: 16px;
	writing-mode: vertical-rl;
	text-orientation: sideways;

	small {
		font-size: 12px;
	}
`;

const DockAdd = styled.button`
	margin-top: 22px;
`;

const ColorPalette = styled.aside`
	display: flex;
	flex-direction: column;
	width: 18px;
	flex: none;
	background: #f7f7f7;
	overflow: hidden;
`;

const PaletteHead = styled.div`
	display: flex;
	flex-direction: column;
	align-items: flex-start;
	gap: 5px;
	height: 67px;
	padding: 5px 0 0 3px;
	flex: none;
`;

const Dots = styled.div`
	width: 100%;
	border-top: 1px dotted #999;
`;

const PaletteList = styled.div`
	flex: 1;
	min-height: 0;
	overflow: hidden;
`;

const PaletteFoot = styled.div`
	display: flex;
	flex-direction: column;
	gap: 8px;
	height: 50px;
	padding: 4px 0 0 4px;
	flex: none;
`;

const StatusBar = styled.footer`
	display: grid;
	grid-template-columns: 190px 214px 1fr auto;
	align-items: center;
	height: 40px;
	flex: none;
	margin-bottom: 1px;
	padding: 0 12px 0 5px;
	background: #f7f7f7;
	border-top: 1px solid #cfcfcf;
`;

const StatusCell = styled.div`
	display: flex;
	align-items: center;
	gap: ${p => p.$gap || 0}px;
`;

const FillInfo = styled.span`
	display: flex;
	align-items: center;
	gap: 3px;
	margin-left: -9px;
`;

const NoFill = styled.span`
	width: 22px;
	height: 22px;
	background: #fff;
	border: 1px solid #555;
`;

const OutlineCell = styled(StatusCell)`
	gap: 4px;
	padding-left: 5px;
	border-left: 1px solid #cfcfcf;

	span + span {
		margin-left: 4px;
	}
`;

const OutlineColor = styled.i`
	width: 21px;
	height: 21px;
	margin-left: 2px;
	background: #000;
`;

const Overlay = styled.svg`
	position: absolute;
	left: 0;
	top: 0;
	width: 979px;
	height: 741px;
	pointer-events: none;

	text {
		font-size: 13px;
		fill: #dedede;
	}
`;


export default App
